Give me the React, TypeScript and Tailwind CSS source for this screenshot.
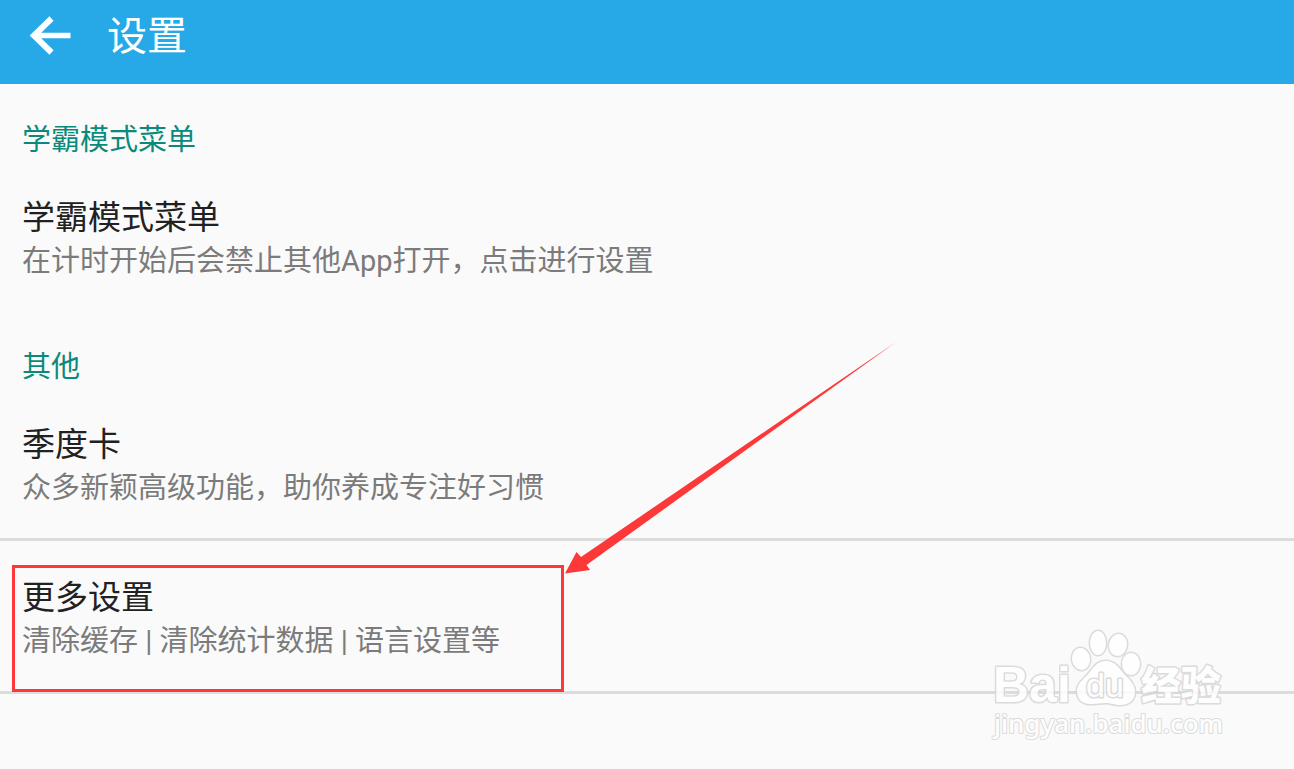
type Item = { title: string; summary: string; divider?: boolean; marked?: boolean };

const groups: { name: string; items: Item[] }[] = [
  {
    name: '学霸模式菜单',
    items: [{ title: '学霸模式菜单', summary: '在计时开始后会禁止其他App打开，点击进行设置' }],
  },
  {
    name: '其他',
    items: [
      { title: '季度卡', summary: '众多新颖高级功能，助你养成专注好习惯', divider: true },
      { title: '更多设置', summary: '清除缓存 | 清除统计数据 | 语言设置等', divider: true, marked: true },
    ],
  },
];

function BackArrow() {
  return (
    <svg width="60" height="60" viewBox="0 0 60 60" fill="none" stroke="currentColor" strokeWidth="5.5">
      <path d="M31.5 11.5 L14 28.5 L31.5 45.5" strokeWidth="6" />
      <path d="M14 28.5 H50.5" />
    </svg>
  );
}

// Red frame and the tapered arrow that points at its top right corner
function Marker() {
  return (
    <>
      <div className="pointer-events-none absolute left-3 top-6 h-[127px] w-[552px] border-[3px] border-[#fd3838]" />
      <svg
        className="pointer-events-none absolute left-[564px] top-[-201px]"
        width="336"
        height="236"
        viewBox="0 0 336 236"
        fill="#fd3838"
      >
        <path d="M1 233.5 L12.5 212 L17 217 L332 2 L22.5 225 L26 230 Z" />
      </svg>
    </>
  );
}

function SettingItem({ item }: { item: Item }) {
  return (
    <li className={item.divider ? 'relative border-b-[3px] border-[#dcdcdc]' : 'relative'}>
      <button type="button" className="block w-full cursor-pointer px-[22px] pb-[29px] pt-[35px] text-left">
        <span className="block text-[33px] leading-[44px] text-[#212121]">{item.title}</span>
        <span className="block text-[29px] leading-[42px] text-[#7b7b7b]">{item.summary}</span>
      </button>
      {item.marked && <Marker />}
    </li>
  );
}

function Watermark() {
  return (
    <svg
      className="pointer-events-none absolute right-11 top-[526px] opacity-85 [paint-order:stroke]"
      width="280"
      height="150"
      viewBox="0 0 280 150"
      fill="#ffffff"
      stroke="#d6d6d6"
      strokeWidth="3"
      strokeLinejoin="round"
    >
      <text x="23" y="92" className="font-['Liberation_Sans',sans-serif] text-[50px] font-bold">Bai</text>
      <ellipse cx="111" cy="49" rx="9" ry="11" transform="rotate(-8 111 49)" />
      <ellipse cx="128" cy="33" rx="8" ry="12" />
      <ellipse cx="148" cy="35" rx="9" ry="11" transform="rotate(10 148 35)" />
      <ellipse cx="161" cy="54" rx="9" ry="11" />
      <path d="M136 51 C145 51 149 58 154 64 C159 69 165 74 165 82 C165 91 158 95 150 95 C144 95 141 93 136 93 C131 93 127 94 120 94 C112 94 107 89 107 81 C107 73 114 69 119 63 C124 57 127 51 136 51 Z" />
      <text x="116" y="87" className="font-['Liberation_Sans',sans-serif] text-[34px]">du</text>
      <text x="171" y="90" className="font-['Noto_Sans_CJK_SC',sans-serif] text-[40px] font-black">经验</text>
      <text x="24" y="123" strokeWidth="2" className="font-['Noto_Sans',sans-serif] text-[26px] font-medium">
        jingyan.baidu.com
      </text>
    </svg>
  );
}

export default function App() {
  return (
    <div className="flex min-h-screen flex-col bg-[#fafafa] font-[Roboto,'Noto_Sans_CJK_SC',sans-serif]">
      <header className="flex h-[84px] items-center gap-[27px] bg-[#27a8e7] pb-2.5 pl-5 text-white">
        <button type="button" aria-label="返回" className="cursor-pointer">
          <BackArrow />
        </button>
        <h1 className="text-[40px] leading-[60px]">设置</h1>
      </header>
      <main className="relative grow">
        {groups.map(group => (
          <section key={group.name}>
            <h2 className="px-[22px] pt-[35px] text-[29px] leading-[42px] text-[#0b8a7b]">{group.name}</h2>
            <ul>
              {group.items.map(item => (
                <SettingItem key={item.title} item={item} />
              ))}
            </ul>
          </section>
        ))}
        <Watermark />
      </main>
    </div>
  );
}
